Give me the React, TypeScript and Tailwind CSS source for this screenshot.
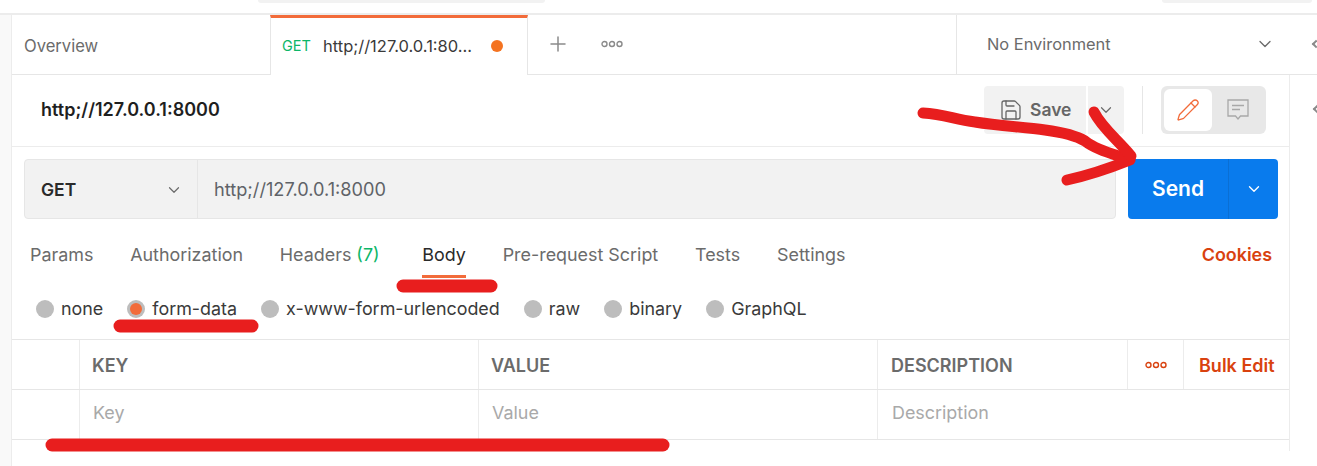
import { ChevronDown, Plus, Save, Pencil } from "lucide-react"

function Dots({ cls }: { cls: string }) {
    return (
        <svg width="22" height="8" viewBox="0 0 22 8" fill="none" stroke="currentColor" strokeWidth="1.4" className={cls}>
            <circle cx="3.5" cy="4" r="2.5" />
            <circle cx="11" cy="4" r="2.5" />
            <circle cx="18.5" cy="4" r="2.5" />
        </svg>
    )
}

function Radio({ label, on }: { label: string, on?: boolean }) {
    return (
        <div className="flex items-center gap-[7px]">
            <div className="w-[18px] h-[18px] rounded-full bg-[#bdbdbd] flex items-center justify-center">
                {on ? <div className="w-3 h-3 rounded-full bg-[#f26b3a]"></div> : null}
            </div>
            <div>{label}</div>
        </div>
    )
}

export default function App() {
    const tabs = ["Params", "Authorization"]
    return (
        <div className="relative w-[1317px] h-[466px] overflow-hidden bg-white text-[#6b6b6b] text-[17.9px] font-['Inter',sans-serif]">
            <div className="h-[15px] bg-white border-b-2 border-[#ececec] flex">
                <div className="ml-[258px] w-[287px] h-[3px] bg-[#f2f2f2] rounded-b-md"></div>
                <div className="ml-[617px] w-[150px] h-[3px] bg-[#f2f2f2] rounded-b-md"></div>
            </div>
            <div className="flex h-[451px]">
                <div className="w-3 shrink-0 bg-[#f9f9f9] border-r border-[#ececec]"></div>
                <div className="flex-1 min-w-0">
                    <div className="flex h-[60px] border-b border-[#e6e6e6]">
                        <div className="w-[258px] shrink-0 flex items-center pl-3 pt-[4px] text-[16.6px]">Overview</div>
                        <div className="w-[258px] shrink-0 h-[60px] bg-white border-t-[3px] border-t-[#f26b3a] border-x border-x-[#e6e6e6] flex items-center pl-[11px] pb-[1px]">
                            <span className="text-[#0cb668] text-[14.5px] w-[41px]">GET</span>
                            <span className="text-[#3a3a3a] text-[16.5px] w-[151px] whitespace-nowrap">http;//127.0.0.1:80...</span>
                            <span className="ml-[17px] w-3 h-3 rounded-full bg-[#f47321]"></span>
                        </div>
                        <div className="flex items-center w-[428px] shrink-0 pl-[18px] gap-[31px] pb-[1px]">
                            <Plus size={24} strokeWidth={1.5} className="text-[#8a8a8a]" />
                            <Dots cls="text-[#8a8a8a]" />
                        </div>
                        <div className="flex-1 flex items-center border-l border-[#e6e6e6] pl-[30px] text-[16.4px] pb-[1px] whitespace-nowrap">
                            <span>No Environment</span>
                            <ChevronDown size={20} strokeWidth={1.6} className="ml-[144px] shrink-0" />
                            <div className="ml-[38px] w-[6px] h-[6px] shrink-0 border-l-2 border-t-2 border-[#8a8a8a] rotate-[-45deg]"></div>
                        </div>
                    </div>
                    <div className="flex h-[376px]">
                        <div className="w-[1277px] shrink-0">
                            <div className="h-[72px] border-b border-[#ececec] flex items-center pl-[29px] pb-[2px]">
                                <div className="flex-1 font-semibold text-[18px] text-[#1f1f1f]">http;//127.0.0.1:8000</div>
                                <div className="flex items-center h-[48px] bg-[#f2f2f2] rounded-l w-[102px] pl-[15px] gap-[7px] font-semibold text-[#666] text-[17.5px]">
                                    <Save size={24} strokeWidth={1.3} />
                                    <span className="pt-[2px]">Save</span>
                                </div>
                                <div className="ml-[2px] h-[48px] w-9 bg-[#f2f2f2] rounded-r flex items-center justify-center">
                                    <ChevronDown size={18} strokeWidth={1.6} />
                                </div>
                                <div className="ml-[18px] mr-[18px] h-[48px] border-l border-[#e6e6e6]"></div>
                                <div className="flex h-[48px] w-[105px] bg-[#e8e8e8] rounded-md p-[3px] mr-[23px]">
                                    <div className="w-[48px] bg-white rounded-md flex items-center justify-center">
                                        <Pencil size={24} strokeWidth={1.3} className="text-[#f26b3a]" />
                                    </div>
                                    <div className="flex-1 flex items-center justify-center">
                                        <svg width="22" height="22" viewBox="0 0 22 22" fill="none" stroke="#a8a8a8" strokeWidth="1.3">
                                            <path d="M1 1h20v16h-7.5L11 20l-2.5-3H1z" />
                                            <path d="M5 6.5h12M5 10.5h8" />
                                        </svg>
                                    </div>
                                </div>
                            </div>
                            <div className="flex mt-3 ml-3 mr-[11px] h-[60px] gap-3">
                                <div className="flex-1 flex bg-[#f2f2f2] border border-[#e6e6e6] rounded">
                                    <div className="w-[173px] flex items-center justify-between pl-4 pr-[14px] pt-[2px] border-r border-[#e6e6e6] font-semibold text-[#2a2a2a] text-[17.5px]">
                                        <span>GET</span>
                                        <ChevronDown size={18} strokeWidth={1.6} className="text-[#6b6b6b]" />
                                    </div>
                                    <div className="pl-4 pt-[2px] flex items-center text-[#5f6368] text-[18.2px]">http;//127.0.0.1:8000</div>
                                </div>
                                <div className="w-[150px] flex bg-[#097bed] rounded text-white">
                                    <div className="w-[101px] flex items-center justify-center font-semibold text-[21px] border-r border-[#0a6fd4]">Send</div>
                                    <div className="flex-1 flex items-center justify-center">
                                        <ChevronDown size={18} strokeWidth={1.8} />
                                    </div>
                                </div>
                            </div>
                            <div className="flex h-[60px] ml-[18px] mr-[17px] pt-[23px] gap-[36.8px]">
                                {tabs.map((a, i) => {
                                    return <div key={i}>{a}</div>
                                })}
                                <div className="mr-[6px]">Headers <span className="text-[#0cb668]">(7)</span></div>
                                <div className="relative text-[#2a2a2a]">
                                    Body
                                    <div className="absolute left-0 right-0 top-[33px] h-[3px] bg-[#f26b3a]"></div>
                                </div>
                                <div>Pre-request Script</div>
                                <div>Tests</div>
                                <div>Settings</div>
                                <div className="ml-auto font-semibold text-[#d9420f]">Cookies</div>
                            </div>
                            <div className="flex items-center h-[60px] ml-[24px] gap-[24px] text-[#3a3a3a]">
                                <Radio label="none" />
                                <Radio label="form-data" on />
                                <Radio label="x-www-form-urlencoded" />
                                <Radio label="raw" />
                                <Radio label="binary" />
                                <Radio label="GraphQL" />
                            </div>
                            <div className="flex h-[51px] border-y border-[#e6e6e6] font-semibold text-[#6b6b6b] text-[18px]">
                                <div className="w-[67px]"></div>
                                <div className="w-[399px] border-l border-[#ececec] pl-3 pt-[2px] flex items-center">KEY</div>
                                <div className="w-[399px] border-l border-[#ececec] pl-3 pt-[2px] flex items-center">VALUE</div>
                                <div className="w-[250px] border-l border-[#ececec] pl-[13px] pt-[2px] flex items-center">DESCRIPTION</div>
                                <div className="w-[56px] border-l border-[#ececec] flex items-center justify-center text-[#d9420f]">
                                    <Dots cls="" />
                                </div>
                                <div className="flex-1 border-l border-[#ececec] flex items-center pl-[15px] pt-[2px] text-[#d9420f] whitespace-nowrap">Bulk Edit</div>
                            </div>
                            <div className="flex h-[50px] border-b border-[#e6e6e6] text-[#a9a9a9]">
                                <div className="w-[67px]"></div>
                                <div className="w-[399px] border-l border-[#ececec] pl-[13px] pb-[2px] flex items-center">Key</div>
                                <div className="w-[399px] border-l border-[#ececec] pl-[13px] pb-[2px] flex items-center">Value</div>
                                <div className="flex-1 border-l border-[#ececec] pl-[14px] pb-[2px] flex items-center">Description</div>
                            </div>
                        </div>
                        <div className="flex-1 border-l border-[#ececec] pt-[31px] pl-6">
                            <div className="w-[6px] h-[6px] border-l-2 border-t-2 border-[#8a8a8a] rotate-[-45deg]"></div>
                        </div>
                    </div>
                </div>
            </div>
            {/* hand drawn annotations */}
            <svg width="1317" height="466" className="absolute left-0 top-0 pointer-events-none" fill="none" stroke="#e81e1e" strokeLinecap="round" strokeLinejoin="round">
                <path d="M923 113 C945 114 955 120 975 122 C1000 126 1025 127 1045 130 C1060 132 1075 135 1085 141 C1095 149 1110 153 1130 160 C1110 168 1090 175 1067 180" strokeWidth="11" />
                <path d="M1094 112 C1102 128 1118 140 1131 156" strokeWidth="11" />
                <path d="M403 286 L491 286" strokeWidth="13" />
                <path d="M120 326 L252 326" strokeWidth="13" />
                <path d="M52 445 L663 445" strokeWidth="13" />
            </svg>
        </div>
    )
}
